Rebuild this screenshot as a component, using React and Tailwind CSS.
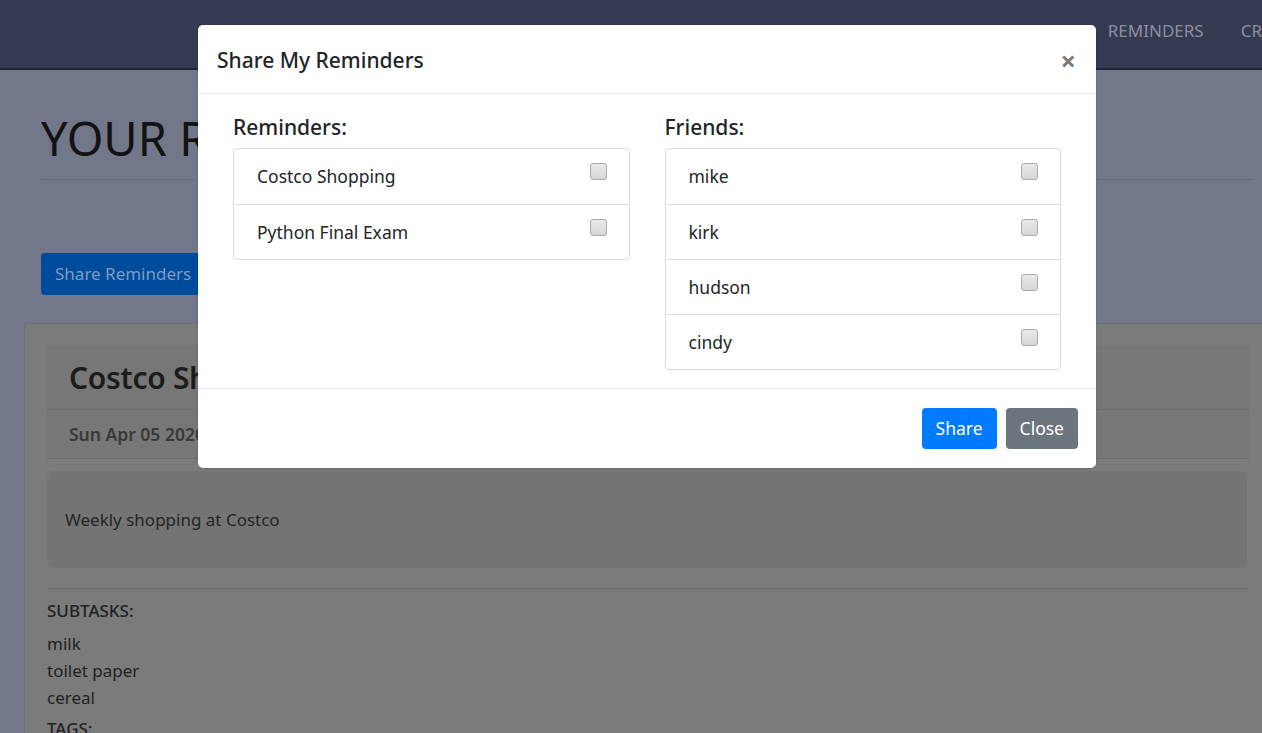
import React from "react";

function Check() {
  return (
    <span className="mt-[14px] block h-[17px] w-[17px] shrink-0 rounded-[3px] border border-[#a9a9a9] bg-gradient-to-b from-[#e9e9e9] to-[#d6d6d6]" />
  );
}

function ListGroup({ items }) {
  return (
    <div className="rounded-[4px] border border-[#dcdcdc]">
      {items.map((t, i) => (
        <div
          key={t}
          className={
            "flex h-[55px] items-start justify-between pl-[23px] pr-[22px] " +
            (i > 0 ? "border-t border-[#dcdcdc]" : "")
          }
        >
          <span className="pt-[14px] text-[17.5px] leading-[26px] text-[#212529]">{t}</span>
          <Check />
        </div>
      ))}
    </div>
  );
}

export default function App() {
  return (
    <div className="relative h-[733px] w-full overflow-hidden bg-[#73778a] font-['Noto_Sans','Open_Sans',sans-serif] text-[#1b1b1b]">
      {/* NAV */}
      <nav className="flex h-[70px] items-start gap-[37px] whitespace-nowrap border-b-2 border-[#22253a] bg-[#363a51] pl-[1020px] pt-[18px] text-[17px] text-[#8b8fa1]">
        <span>HOME</span>
        <span>REMINDERS</span>
        <span>CREATE</span>
      </nav>

      {/* PAGE */}
      <div className="px-[41px] pt-[38px]">
        <h1 className="text-[47px] font-normal leading-[60px] text-[#131313]">YOUR REMINDERS</h1>
        <div className="mt-[11px] w-[1212px] border-t border-[#666a7a]" />
        <button className="mt-[73px] h-[42px] rounded-[4px] bg-[#004b9b] px-[14px] text-[17px] text-[#7f9bc2]">
          Share Reminders
        </button>
      </div>

      <div className="ml-[24px] mt-[28px] w-[1248px] rounded-t-[4px] border border-[#727272] bg-[#7b7b7b] px-[22px] pt-[22px]">
        <div className="flex h-[64px] items-center border-b border-[#6c6c6c] bg-[#777777] px-[22px]">
          <span className="text-[30px] font-semibold tracking-[-0.3px] text-[#1c1c1c]">Costco Shopping</span>
        </div>
        <div className="flex h-[49px] items-center border-b border-[#6c6c6c] bg-[#777777] px-[22px]">
          <span className="text-[17.5px] font-semibold text-[#3a3a3a]">Sun Apr 05 2020</span>
        </div>
        <div className="mt-[12px] mr-[2px] flex h-[97px] items-center rounded-[8px] bg-[#747474] px-[18px]">
          <span className="text-[17px] text-[#252525]">Weekly shopping at Costco</span>
        </div>
        <div className="mt-[20px] border-t border-[#6c6c6c]" />
        <div className="pt-[8px] text-[17px] leading-[27px] text-[#222]">
          <div className="font-medium">SUBTASKS:</div>
          <div className="mt-[6px]">milk</div>
          <div>toilet paper</div>
          <div>cereal</div>
          <div className="mt-[4px] font-medium">TAGS:</div>
        </div>
      </div>

      {/* MODAL */}
      <div className="absolute left-[198px] top-[25px] w-[898px] rounded-[5px] bg-white shadow-sm">
        <div className="flex h-[69px] items-center justify-between border-b border-[#e9ecef] pl-[19px] pr-[20px] pt-[3px]">
          <span className="text-[21px] font-medium text-[#212529]">Share My Reminders</span>
          <span className="text-[27px] font-bold leading-none text-[#7a7a7a]">×</span>
        </div>
        <div className="grid grid-cols-2 gap-[35px] border-b border-[#e9ecef] px-[35px] pb-[18px] pt-[17px]">
          <div>
            <div className="mb-[5px] text-[21px] font-medium leading-[32px] text-[#212529]">Reminders:</div>
            <ListGroup items={["Costco Shopping", "Python Final Exam"]} />
          </div>
          <div>
            <div className="mb-[5px] text-[21px] font-medium leading-[32px] text-[#212529]">Friends:</div>
            <ListGroup items={["mike", "kirk", "hudson", "cindy"]} />
          </div>
        </div>
        <div className="flex h-[79px] items-center justify-end gap-[9px] pr-[18px]">
          <button className="h-[41px] rounded-[4px] bg-[#007bff] px-[14px] text-[17.5px] text-white">Share</button>
          <button className="h-[41px] rounded-[4px] bg-[#6c757d] px-[14px] text-[17.5px] text-white">Close</button>
        </div>
      </div>
    </div>
  );
}
